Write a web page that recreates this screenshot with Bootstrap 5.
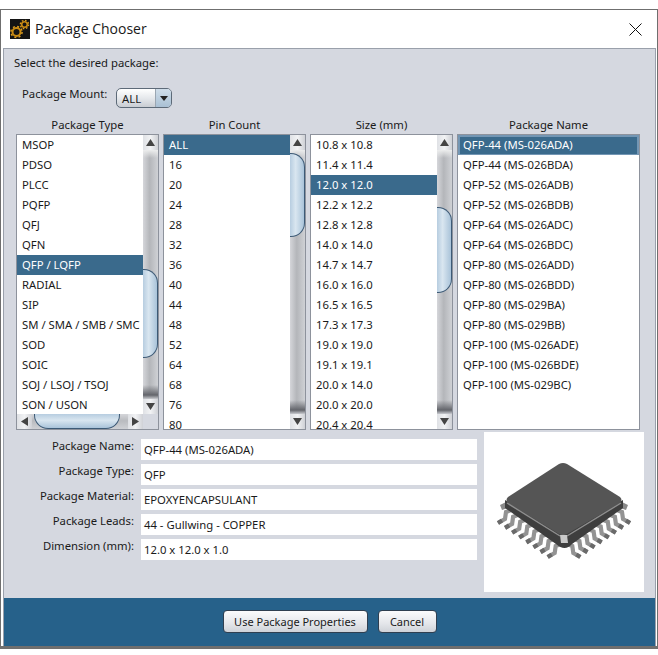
<!DOCTYPE html>
<html>

<head>
  <title>Package Chooser</title>
  <link href="https://cdn.jsdelivr.net/npm/bootstrap@5.3.2/dist/css/bootstrap.min.css" rel="stylesheet">
  <script src="https://cdn.jsdelivr.net/npm/bootstrap@5.3.2/dist/js/bootstrap.bundle.min.js"></script>
  <style>
    body { background: #fff; color: #1a1a1a; font-family: "Noto Sans", "Liberation Sans", sans-serif; font-size: 11.3px; line-height: 16px; }
    .chooser-window { width: 658px; height: 640px; margin-top: 9px; border: 1px solid #6f6f6f; border-bottom-width: 3px; background: #fff; }
    .title-row { height: 38px; padding: 0 10px 0 9px; }
    .title-text { font-family: "Open Sans", sans-serif; font-size: 14px; margin-left: 5px; margin-top: -1px; }
    .close-x { margin-left: auto; margin-right: 5px; }
    .chooser-panel { margin: 0 1px 0 2px; background: #d5d8e0; border: 1px solid #9aa0ab; border-bottom: 0; }
    .panel-body { padding: 6px 0 0 0; }
    .select-label { padding-left: 10px; height: 16px; }
    .mount-row { margin-top: 17px; padding-left: 18px; height: 20px; }
    .mount-label { width: 94px; margin-top: -2px; }
    .mount-combo { width: 56px; height: 20px; border: 1px solid #5d6a78; border-radius: 5px; overflow: hidden; background: linear-gradient(#fff, #e3e6ea 55%, #c9cdd3); }
    .mount-value { flex-grow: 1; padding-left: 5px; line-height: 20px; }
    .mount-arrow { width: 16px; background: linear-gradient(#cfdde9, #a9c0d4); border-left: 1px solid #9aa6b2; }
    .lists-grid { display: grid; grid-template-columns: 143px 143px 143px 183px; column-gap: 4px; margin: 9px 0 0 12px; }
    .list-head { height: 17px; line-height: 16px; text-align: center; }
    .list-frame { height: 296px; border: 1px solid #8d929c; background: #fff; }
    .list-rows { min-width: 0; flex: 1 1 0; overflow: hidden; }
    .list-entry { height: 20px; line-height: 19px; padding-left: 5px; white-space: nowrap; overflow: hidden; }
    .list-entry.picked { background: #3a6a8c; color: #fff; }
    .list-entry.picked-focus { background: #3a6a8c; color: #fff; border: 2px solid #7396b4; border-bottom-width: 1px; line-height: 15px; padding-left: 3px; }
    .scroll-v { width: 15px; flex: none; }
    .scroll-btn { width: 15px; height: 15px; background: linear-gradient(90deg, #dfe1e5, #f1f2f4 50%, #cfd1d6); flex: none; }
    .scroll-track { flex-grow: 1; min-height: 0; background: linear-gradient(#eceded, rgba(236, 237, 237, 0) 8px, rgba(90, 92, 98, 0) calc(100% - 14px), #63656b calc(100% - 4px), #c9cbd0), linear-gradient(90deg, #d5d6da, #b4b6ba 45%, #cfd1d5); }
    .scroll-h .scroll-track { background: linear-gradient(#d5d6da, #b9bbbf 45%, #cfd1d5); }
    .scroll-thumb-v { background: linear-gradient(90deg, #b7cde0, #d9e6f0 40%, #a9c3d9); border: 1px solid #3d5a76; border-left: 0; border-radius: 0 14px 14px 0; }
    .scroll-h { height: 15px; flex: none; }
    .scroll-thumb-h { height: 15px; margin-left: 2px; width: 86px; background: linear-gradient(#b7cde0, #d9e6f0 45%, #a9c3d9); border: 1px solid #3d5a76; border-top: 0; border-radius: 0 0 14px 14px; }
    .scroll-corner { width: 15px; flex: none; background: #d5d8e0; }
    .info-block { width: 473px; padding-top: 9px; flex: none; }
    .info-row { height: 21px; margin-bottom: 4px; }
    .info-label { width: 130px; flex: none; text-align: right; line-height: 13px; }
    .info-value { width: 336px; margin-left: 7px; background: #fff; padding-left: 3px; line-height: 21px; }
    .chip-box { width: 160px; height: 160px; margin: 2px 0 0 7px; background: #fff; }
    .chooser-footer { height: 48px; margin-top: 3px; background: #26618a; padding-top: 12px; gap: 10px; }
    .footer-btn { height: 23px; border: 1px solid #2f3f50; border-radius: 4px; background: linear-gradient(#fbfbfc, #e4e6ea 60%, #cfd2d8); color: #1a1a1a; font-size: 11px; line-height: 21px; padding: 0; text-align: center; }
    .btn-use { width: 145px; }
    .btn-cancel { width: 59px; }
  </style>
</head>

<body>
  <div class="chooser-window d-flex flex-column">
    <div class="title-row d-flex align-items-center">
      <svg width="20" height="20" viewBox="0 0 20 20">
        <rect width="20" height="20" fill="#141414" />
        <circle cx="6.5" cy="13" r="4" fill="none" stroke="#c98a12" stroke-width="2" />
        <circle cx="6.5" cy="13" r="5.6" fill="none" stroke="#e0a020" stroke-width="1.4" stroke-dasharray="2 2.4" />
        <circle cx="14.5" cy="5.5" r="2.8" fill="none" stroke="#c98a12" stroke-width="1.6" />
        <circle cx="14.5" cy="5.5" r="4.2" fill="none" stroke="#e0a020" stroke-width="1.2" stroke-dasharray="1.6 1.7" />
      </svg>
      <span class="title-text">Package Chooser</span>
      <svg class="close-x" width="13" height="13" viewBox="0 0 13 13">
        <path d="M0.5 0.5 L12.5 12.5 M12.5 0.5 L0.5 12.5" stroke="#111" stroke-width="1" fill="none" />
      </svg>
    </div>

    <div class="chooser-panel flex-grow-1 d-flex flex-column">
      <div class="panel-body flex-grow-1">
        <div class="select-label">Select the desired package:</div>
        <div class="mount-row d-flex">
          <div class="mount-label">Package Mount:</div>
          <div class="mount-combo d-flex">
            <div class="mount-value">ALL</div>
            <div class="mount-arrow d-flex align-items-center justify-content-center">
              <svg width="8" height="5" viewBox="0 0 8 5"><path d="M0 0 H8 L4 5 Z" fill="#222" /></svg>
            </div>
          </div>
        </div>

        <div class="lists-grid" id="listsGrid"></div>

        <div class="d-flex">
          <div class="info-block" id="infoBlock"></div>
          <div class="chip-box">
            <svg width="160" height="160" viewBox="0 0 160 160" id="chipSvg"></svg>
          </div>
        </div>
      </div>

      <div class="chooser-footer d-flex justify-content-center">
        <button type="button" class="footer-btn btn-use">Use Package Properties</button>
        <button type="button" class="footer-btn btn-cancel">Cancel</button>
      </div>
    </div>
  </div>

  <script>
    const lists = [
      {
        title: "Package Type", picked: 6, thumbTop: 119, thumbHeight: 89, horizontal: true,
        rows: ["MSOP", "PDSO", "PLCC", "PQFP", "QFJ", "QFN", "QFP / LQFP", "RADIAL", "SIP", "SM / SMA / SMB / SMC", "SOD", "SOIC", "SOJ / LSOJ / TSOJ", "SON / USON"]
      },
      {
        title: "Pin Count", picked: 0, thumbTop: 3, thumbHeight: 84,
        rows: ["ALL", "16", "20", "24", "28", "32", "36", "40", "44", "48", "52", "64", "68", "76", "80"]
      },
      {
        title: "Size (mm)", picked: 2, thumbTop: 57, thumbHeight: 86,
        rows: ["10.8 x 10.8", "11.4 x 11.4", "12.0 x 12.0", "12.2 x 12.2", "12.8 x 12.8", "14.0 x 14.0", "14.7 x 14.7", "16.0 x 16.0", "16.5 x 16.5", "17.3 x 17.3", "19.0 x 19.0", "19.1 x 19.1", "20.0 x 14.0", "20.0 x 20.0", "20.4 x 20.4"]
      },
      {
        title: "Package Name", picked: 0, focus: true,
        rows: ["QFP-44 (MS-026ADA)", "QFP-44 (MS-026BDA)", "QFP-52 (MS-026ADB)", "QFP-52 (MS-026BDB)", "QFP-64 (MS-026ADC)", "QFP-64 (MS-026BDC)", "QFP-80 (MS-026ADD)", "QFP-80 (MS-026BDD)", "QFP-80 (MS-029BA)", "QFP-80 (MS-029BB)", "QFP-100 (MS-026ADE)", "QFP-100 (MS-026BDE)", "QFP-100 (MS-029BC)"]
      }
    ]

    const info = [
      ["Package Name:", "QFP-44 (MS-026ADA)"],
      ["Package Type:", "QFP"],
      ["Package Material:", "EPOXYENCAPSULANT"],
      ["Package Leads:", "44 - Gullwing - COPPER"],
      ["Dimension (mm):", "12.0 x 12.0 x 1.0"]
    ]

    const upArrow = '<svg width="9" height="7" viewBox="0 0 9 7"><path d="M4.5 0 L9 7 H0 Z" fill="#444"/></svg>'
    const downArrow = '<svg width="9" height="7" viewBox="0 0 9 7"><path d="M0 0 H9 L4.5 7 Z" fill="#444"/></svg>'
    const leftArrow = '<svg width="7" height="9" viewBox="0 0 7 9"><path d="M0 4.5 L7 0 V9 Z" fill="#444"/></svg>'
    const rightArrow = '<svg width="7" height="9" viewBox="0 0 7 9"><path d="M7 4.5 L0 0 V9 Z" fill="#444"/></svg>'
    const arrowBtn = (svg) => `<div class="scroll-btn d-flex align-items-center justify-content-center">${svg}</div>`

    const grid = document.querySelector("#listsGrid")

    lists.forEach(function (list) {
      const rows = list.rows.map(function (row, i) {
        let cls = "list-entry"
        if (i === list.picked) cls += list.focus ? " picked-focus" : " picked"
        return `<div class="${cls}">${row}</div>`
      }).join("")

      let vbar = ""
      if (list.thumbHeight) {
        vbar = `<div class="scroll-v d-flex flex-column">${arrowBtn(upArrow)}
          <div class="scroll-track"><div class="scroll-thumb-v" style="height:${list.thumbHeight}px;transform:translateY(${list.thumbTop}px)"></div></div>
          ${arrowBtn(downArrow)}</div>`
      }

      let hbar = ""
      if (list.horizontal) {
        hbar = `<div class="scroll-h d-flex">${arrowBtn(leftArrow)}
          <div class="scroll-track"><div class="scroll-thumb-h"></div></div>
          ${arrowBtn(rightArrow)}<div class="scroll-corner"></div></div>`
      }

      const col = document.createElement("div")
      col.innerHTML = `<div class="list-head">${list.title}</div>
        <div class="list-frame d-flex flex-column">
          <div class="d-flex flex-grow-1" style="min-height:0">
            <div class="list-rows">${rows}</div>${vbar}
          </div>${hbar}
        </div>`
      grid.appendChild(col)
    })

    const infoBlock = document.querySelector("#infoBlock")
    info.forEach(function (item) {
      const row = document.createElement("div")
      row.className = "info-row d-flex"
      row.innerHTML = `<div class="info-label">${item[0]}</div><div class="info-value">${item[1]}</div>`
      infoBlock.appendChild(row)
    })

    // chip picture: pins along the two front edges, then the body on top
    function pin(x, y, dir) {
      const pts = [[0, 0], [5 * dir, 2], [6 * dir, 9], [13 * dir, 13]]
      const line = pts.map(p => (x + p[0]) + "," + (y + p[1])).join(" ")
      return `<polyline points="${line}" fill="none" stroke="#939393" stroke-width="4.2"/>
        <line x1="${x + 9 * dir}" y1="${y + 10.5}" x2="${x + 13 * dir}" y2="${y + 13}" stroke="#6a6a6a" stroke-width="4.2"/>`
    }
    let chip = ""
    for (let i = 0; i < 8; i++) {
      chip += pin(27 + i * 7.1, 78 + i * 4.85, -1)
      chip += pin(133 - i * 7.1, 78 + i * 4.85, 1)
    }
    chip += `<path d="M16 73 L22 70 L24 76 L18 78 Z M144 73 L138 70 L136 76 L142 78 Z" fill="#8a8a8a"/>
      <path d="M21 68 L79 103 L139 68 L139 76 L88 112 Q81 120 72 112 L21 76 Z" fill="#3e3e3e"/>
      <path d="M75 32 Q79 30 83 32 L136 65 Q139 68 136 71 L83 102 Q79 104 75 102 L24 71 Q21 68 24 65 Z" fill="#555"/>
      <path d="M23 71 L76 104 M137 71 L83 104" stroke="#8e8e8e" stroke-width="1.4" fill="none"/>
      <path d="M76 103 L83 103 L84 111 L77 111 Z" fill="#c9c9c9"/>`
    document.querySelector("#chipSvg").innerHTML = chip
  </script>
</body>

</html>
